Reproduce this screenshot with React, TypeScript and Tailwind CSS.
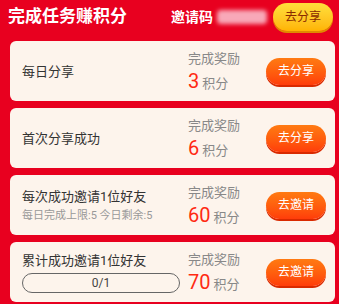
import React from "react";

const font = { fontFamily: '"Roboto", "Noto Sans CJK SC", sans-serif' };

function OrangeButton({ label }: { label: string }) {
  return (
    <button className="w-[60px] h-[27px] rounded-full bg-gradient-to-b from-[#ff7a12] to-[#ff3c0a] shadow-[0_2px_0_#d92a00] text-white text-[12px] leading-none flex items-center justify-center">
      {label}
    </button>
  );
}

function Reward({ points }: { points: number }) {
  return (
    <div className="w-[78px] flex flex-col">
      <span className="text-[13px] leading-[18px] text-[#888]">完成奖励</span>
      <div className="flex items-baseline gap-[3px] mt-[2px]">
        <span className="text-[20px] leading-[22px] text-[#ff2a12]">{points}</span>
        <span className="text-[13px] leading-[18px] text-[#888]">积分</span>
      </div>
    </div>
  );
}

function Card({ children, points, action }: { children: React.ReactNode; points: number; action: string }) {
  return (
    <div className="h-[60px] rounded-[6px] bg-[#fdf4ec] flex items-center pl-[12px] pr-[9px]">
      <div className="flex-1 min-w-0">{children}</div>
      <Reward points={points} />
      <OrangeButton label={action} />
    </div>
  );
}

export default function App() {
  return (
    <div className="w-[339px] h-[304px] bg-[#e8001f] overflow-hidden" style={font}>
      <div className="h-[41px] flex items-center pl-[8px] pr-[6px] pb-[7px]">
        <span className="text-white font-bold text-[17px]">完成任务赚积分</span>
        <span className="ml-auto text-white font-bold text-[14px]">邀请码</span>
        <span className="ml-[4px] w-[50px] h-[14px] bg-[#f8a8b8] blur-[2px] rounded-sm" />
        <button className="ml-[6px] w-[60px] h-[28px] rounded-full bg-gradient-to-b from-[#ffe03a] to-[#ffb400] shadow-[0_2px_0_#e08a00] text-[#8a2a00] text-[12px] leading-none flex items-center justify-center">
          去分享
        </button>
      </div>
      <div className="flex flex-col gap-[7px] pl-[10px] pr-[4px]">
        <Card points={3} action="去分享">
          <span className="text-[13px] text-[#333]">每日分享</span>
        </Card>
        <Card points={6} action="去分享">
          <span className="text-[13px] text-[#333]">首次分享成功</span>
        </Card>
        <Card points={60} action="去邀请">
          <div className="text-[13px] leading-[18px] text-[#333]">每次成功邀请1位好友</div>
          <div className="text-[11px] leading-[14px] text-[#999] mt-[3px]">每日完成上限:5 今日剩余:5</div>
        </Card>
        <Card points={70} action="去邀请">
          <div className="text-[13px] leading-[18px] text-[#333]">累计成功邀请1位好友</div>
          <div className="mt-[3px] w-[158px] h-[20px] rounded-full border border-[#666] flex items-center justify-center text-[12px] text-[#444]">
            0/1
          </div>
        </Card>
      </div>
    </div>
  );
}
